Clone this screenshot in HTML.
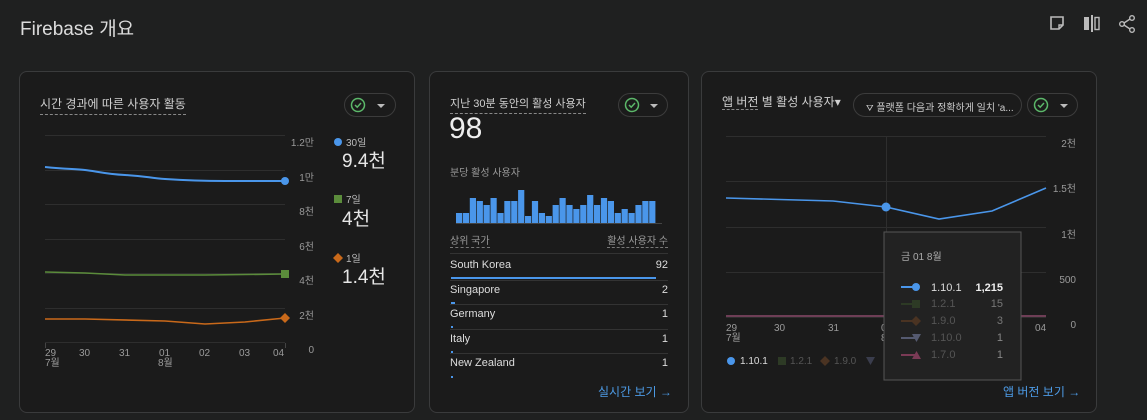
<!DOCTYPE html>
<html><head><meta charset="utf-8"><style>
*{margin:0;padding:0;box-sizing:border-box}
body{width:1147px;height:420px;background:#1f2020;font-family:"Liberation Sans","Noto Sans CJK KR",sans-serif;color:#e3e3e3;position:relative;overflow:hidden}
.a{position:absolute;white-space:nowrap}
.card{position:absolute;background:#1b1b1b;border:1px solid #3a3b3c;border-radius:8px;top:71px;height:342px}
.t{font-size:12px;color:#d0d0d0;border-bottom:1px dashed #888;padding-bottom:2px}
.s{font-size:10px;color:#9a9a9a}
.chip{position:absolute;border:1px solid #3c3c3c;border-radius:12px;height:24px}
.tri{position:absolute;width:0;height:0;border-left:4px solid transparent;border-right:4px solid transparent;border-top:4px solid #bbb}
.row{position:absolute;left:20px;width:218px;font-size:11px;color:#ddd}
.link{font-size:12px;color:#4d9be6}
</style></head><body>
<div class="a" style="left:20px;top:14px;font-size:19px;color:#dcdcdc">Firebase 개요</div>
<svg class="a" style="left:1048px;top:14px" width="90" height="22" viewBox="0 0 90 22">
<path d="M3 3h12v8l-4 4H3z" fill="none" stroke="#bbb" stroke-width="1.6"/><path d="M11 15v-4h4" fill="none" stroke="#bbb" stroke-width="1.4"/>
<rect x="36" y="3" width="5" height="13" fill="#bbb"/><rect x="43" y="1" width="2" height="17" fill="#bbb"/><rect x="47" y="3.5" width="4" height="12" fill="none" stroke="#bbb" stroke-width="1.4"/>
<circle cx="84" cy="4" r="2.3" fill="none" stroke="#bbb" stroke-width="1.4"/><circle cx="74" cy="10" r="2.3" fill="none" stroke="#bbb" stroke-width="1.4"/><circle cx="84" cy="16" r="2.3" fill="none" stroke="#bbb" stroke-width="1.4"/><path d="M76 9l6-4M76 11l6 4" stroke="#bbb" stroke-width="1.4"/>
</svg>

<!-- card 1 -->
<div class="card" style="left:19px;width:396px">
<div class="a t" style="left:20px;top:23px">시간 경과에 따른 사용자 활동</div>
<div class="chip" style="left:324px;top:21px;width:52px"><svg class="a" style="left:5px;top:3px" width="16" height="16"><circle cx="8" cy="8" r="6.5" fill="none" stroke="#5cb86a" stroke-width="1.5"/><path d="M5 8l2.2 2.2L11 6" fill="none" stroke="#5cb86a" stroke-width="1.5"/></svg><div class="tri" style="left:32px;top:10px"></div></div>
</div>
<svg class="a" style="left:20px;top:71px" width="396" height="342">
<g stroke="#2e2e2e" stroke-width="1">
<line x1="25" x2="265" y1="64.5" y2="64.5"/><line x1="25" x2="265" y1="99.5" y2="99.5"/><line x1="25" x2="265" y1="133.5" y2="133.5"/><line x1="25" x2="265" y1="168.5" y2="168.5"/><line x1="25" x2="265" y1="202.5" y2="202.5"/><line x1="25" x2="265" y1="237.5" y2="237.5"/><line x1="25" x2="265" y1="271.5" y2="271.5"/></g>
<g stroke="#444"><line x1="25.5" x2="25.5" y1="272" y2="277"/><line x1="265.5" x2="265.5" y1="272" y2="277"/></g>
<g font-size="10" fill="#9a9a9a" text-anchor="end"><text x="294" y="75">1.2만</text><text x="294" y="110">1만</text><text x="294" y="144">8천</text><text x="294" y="179">6천</text><text x="294" y="213">4천</text><text x="294" y="248">2천</text><text x="294" y="282">0</text></g>
<g font-size="10" fill="#9a9a9a"><text x="25" y="285">29</text><text x="59" y="285">30</text><text x="99" y="285">31</text><text x="139" y="285">01</text><text x="179" y="285">02</text><text x="219" y="285">03</text><text x="253" y="285">04</text><text x="25" y="295">7월</text><text x="138" y="295">8월</text></g>
<path d="M25 96C45 98 55 98 65 99S85 103 105 104S130 107 145 108S185 110 205 110S255 110 265 110" fill="none" stroke="#4a96ea" stroke-width="2"/>
<circle cx="265" cy="110" r="4" fill="#4a96ea"/>
<path d="M25 201L65 202L105 204L185 204L265 203" fill="none" stroke="#5b8c3b" stroke-width="1.6"/>
<rect x="261" y="199" width="8" height="8" fill="#5b8c3b"/>
<path d="M25 248L65 248L145 250L185 253L225 251L265 247" fill="none" stroke="#c9691a" stroke-width="1.6"/>
<path d="M265 242l5 5-5 5-5-5z" fill="#c9691a"/>
<circle cx="318" cy="71" r="4" fill="#4a96ea"/><text x="326" y="75" font-size="10" fill="#bbb">30일</text>
<text x="322" y="96" font-size="19" fill="#e6e6e6">9.4천</text>
<rect x="314" y="124" width="8" height="8" fill="#5b8c3b"/><text x="326" y="132" font-size="10" fill="#bbb">7일</text>
<text x="322" y="154" font-size="19" fill="#e6e6e6">4천</text>
<path d="M318 182l5 5-5 5-5-5z" fill="#c9691a"/><text x="326" y="191" font-size="10" fill="#bbb">1일</text>
<text x="322" y="212" font-size="19" fill="#e6e6e6">1.4천</text>
</svg>

<!-- card 2 -->
<div class="card" style="left:429px;width:260px">
<div class="a t" style="left:20px;top:23px;font-size:11px">지난 30분 동안의 활성 사용자</div>
<div class="chip" style="left:188px;top:21px;width:50px"><svg class="a" style="left:5px;top:3px" width="16" height="16"><circle cx="8" cy="8" r="6.5" fill="none" stroke="#5cb86a" stroke-width="1.5"/><path d="M5 8l2.2 2.2L11 6" fill="none" stroke="#5cb86a" stroke-width="1.5"/></svg><div class="tri" style="left:31px;top:10px"></div></div>
<div class="a" style="left:19px;top:40px;font-size:30px;color:#eee">98</div>
<div class="a s" style="left:20px;top:92px">분당 활성 사용자</div>
<svg class="a" style="left:26px;top:110px" width="212" height="42" id="bars"></svg>
<div class="a s" style="left:20px;top:160px;border-bottom:1px dashed #777">상위 국가</div>
<div class="a s" style="right:20px;top:160px;border-bottom:1px dashed #777">활성 사용자 수</div>
<div class="a" style="left:20px;top:181px;width:218px;height:1px;background:#333"></div>
<div class="row" style="top:187px">South Korea<span style="float:right">92</span></div>
<div class="a" style="left:21px;top:205px;width:205px;height:2px;background:#4a96ea"></div>
<div class="a" style="left:20px;top:208px;width:218px;height:1px;background:#333"></div>
<div class="row" style="top:212px">Singapore<span style="float:right">2</span></div>
<div class="a" style="left:21px;top:230px;width:4px;height:2px;background:#4a96ea"></div>
<div class="a" style="left:20px;top:232px;width:218px;height:1px;background:#333"></div>
<div class="row" style="top:236px">Germany<span style="float:right">1</span></div>
<div class="a" style="left:21px;top:254px;width:2px;height:2px;background:#4a96ea"></div>
<div class="a" style="left:20px;top:257px;width:218px;height:1px;background:#333"></div>
<div class="row" style="top:261px">Italy<span style="float:right">1</span></div>
<div class="a" style="left:21px;top:279px;width:2px;height:2px;background:#4a96ea"></div>
<div class="a" style="left:20px;top:281px;width:218px;height:1px;background:#333"></div>
<div class="row" style="top:285px">New Zealand<span style="float:right">1</span></div>
<div class="a" style="left:21px;top:304px;width:2px;height:2px;background:#4a96ea"></div>
<div class="a link" style="left:168px;top:311px">실시간 보기 →</div>
</div>

<!-- card 3 -->
<div class="card" style="left:701px;width:396px">
<div class="a" style="left:20px;top:21px;font-size:12px;color:#d0d0d0"><span style="border-bottom:1px dashed #888">앱 버전</span> 별 활성 사용자▾</div>
<div class="chip" style="left:151px;top:21px;width:169px;font-size:10px;color:#ccc;padding:5px 0 0 12px"><span style="font-size:9px">⛛</span> 플랫폼 다음과 정확하게 일치 'a...</div>
<div class="chip" style="left:325px;top:21px;width:51px"><svg class="a" style="left:5px;top:3px" width="16" height="16"><circle cx="8" cy="8" r="6.5" fill="none" stroke="#5cb86a" stroke-width="1.5"/><path d="M5 8l2.2 2.2L11 6" fill="none" stroke="#5cb86a" stroke-width="1.5"/></svg><div class="tri" style="left:32px;top:10px"></div></div>
<div class="a link" style="left:301px;top:311px">앱 버전 보기 →</div>
</div>
<svg class="a" style="left:701px;top:71px" width="396" height="342">
<g stroke="#2e2e2e"><line x1="25" x2="345" y1="65.5" y2="65.5"/><line x1="25" x2="345" y1="110.5" y2="110.5"/><line x1="25" x2="345" y1="156.5" y2="156.5"/><line x1="25" x2="345" y1="201.5" y2="201.5"/><line x1="25" x2="345" y1="246.5" y2="246.5"/><line x1="185.5" x2="185.5" y1="65" y2="250"/></g>
<g font-size="10" fill="#9a9a9a" text-anchor="end"><text x="375" y="76">2천</text><text x="375" y="121">1.5천</text><text x="375" y="167">1천</text><text x="375" y="212">500</text><text x="375" y="257">0</text></g>
<path d="M25 245H345" stroke="#8a4a6a" stroke-width="1.5"/>
<g font-size="10" fill="#9a9a9a"><text x="25" y="260">29</text><text x="73" y="260">30</text><text x="127" y="260">31</text><text x="180" y="260">01</text><text x="233" y="260">02</text><text x="287" y="260">03</text><text x="334" y="260">04</text><text x="25" y="270">7월</text><text x="180" y="270">8월</text></g>
<path d="M25 127L132 130L185 136L238 148L291 140L345 117" fill="none" stroke="#4a96ea" stroke-width="1.6"/>
<circle cx="185" cy="136" r="4.5" fill="#4a96ea"/>
<circle cx="30" cy="290" r="4" fill="#4a96ea"/><text x="39" y="293" font-size="10" fill="#ddd">1.10.1</text>
<rect x="77" y="286" width="8" height="8" fill="#2d3a25"/><text x="89" y="293" font-size="10" fill="#555">1.2.1</text>
<path d="M124 285l5 5-5 5-5-5z" fill="#4a3322"/><text x="133" y="293" font-size="10" fill="#555">1.9.0</text>
<path d="M165 286h9l-4.5 8z" fill="#3a3d4d"/>
<rect x="183" y="161" width="137" height="148" fill="#222" stroke="#555"/>
<text x="200" y="189" font-size="10" fill="#aaa">금 01 8월</text>
<path d="M200 216H216" stroke="#4a96ea" stroke-width="2"/><circle cx="215" cy="216" r="4" fill="#4a96ea"/>
<text x="230" y="220" font-size="11" fill="#ddd">1.10.1</text><text x="302" y="220" font-size="11" fill="#eee" font-weight="bold" text-anchor="end">1,215</text>
<path d="M200 233H214" stroke="#2d3a25" stroke-width="2"/><rect x="211" y="229" width="8" height="8" fill="#2d3a25"/>
<text x="230" y="236" font-size="11" fill="#555">1.2.1</text><text x="302" y="236" font-size="11" fill="#777" text-anchor="end">15</text>
<path d="M200 250H214" stroke="#4a3322" stroke-width="2"/><path d="M215 245l5 5-5 5-5-5z" fill="#4a3322"/>
<text x="230" y="253" font-size="11" fill="#555">1.9.0</text><text x="302" y="253" font-size="11" fill="#777" text-anchor="end">3</text>
<path d="M200 267H214" stroke="#555a70" stroke-width="2"/><path d="M211 263h9l-4.5 8z" fill="#555a70"/>
<text x="230" y="270" font-size="11" fill="#555">1.10.0</text><text x="302" y="270" font-size="11" fill="#888" text-anchor="end">1</text>
<path d="M200 284H214" stroke="#7a3a55" stroke-width="2"/><path d="M211 288h9l-4.5-8z" fill="#7a3a55"/>
<text x="230" y="287" font-size="11" fill="#555">1.7.0</text><text x="302" y="287" font-size="11" fill="#888" text-anchor="end">1</text>
</svg>
<script>
var h=[10,10,25,22,18,25,10,22,22,33,7,22,10,7,18,25,18,14,18,28,18,25,22,10,14,10,18,22,22];
var s='';for(var i=0;i<h.length;i++){s+='<rect x="'+(i*6.9)+'" y="'+(41-h[i])+'" width="6.2" height="'+h[i]+'" fill="#4a96ea"/>';}
s+='<line x1="0" x2="206" y1="41.5" y2="41.5" stroke="#444"/>';
document.getElementById('bars').innerHTML=s;
</script>
</body></html>
